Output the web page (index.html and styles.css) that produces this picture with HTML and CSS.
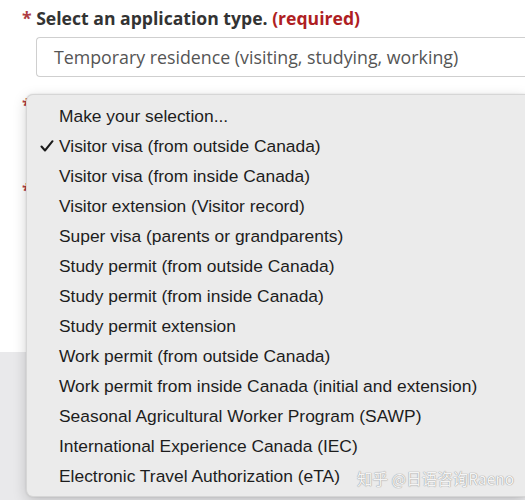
FILE: index.html
```html
<!DOCTYPE html>
<html lang="en">
<head>
<meta charset="utf-8">
<title>Application type</title>
<link rel="stylesheet" href="styles.css">
</head>
<body>
<div class="page">
  <section class="form-area">
    <div class="field">
      <div class="label"><span class="req-star">*</span> Select an application type. <span class="req">(required)</span></div>
      <div class="select">Temporary residence (visiting, studying, working)</div>
    </div>
    <div class="field hidden-field">
      <div class="label"><span class="req-star">*</span></div>
    </div>
    <div class="field hidden-field second">
      <div class="label"><span class="req-star">*</span></div>
    </div>
  </section>
  <footer class="footer"></footer>

  <ul class="menu">
    <li class="item">Make your selection...</li>
    <li class="item checked"><svg class="check" viewBox="0 0 14 12" width="14" height="12"><path d="M1.5 6.5 L5 10.5 L12.5 1.2" fill="none" stroke="#1a1a1a" stroke-width="2" stroke-linecap="round" stroke-linejoin="round"/></svg>Visitor visa (from outside Canada)</li>
    <li class="item">Visitor visa (from inside Canada)</li>
    <li class="item">Visitor extension (Visitor record)</li>
    <li class="item">Super visa (parents or grandparents)</li>
    <li class="item">Study permit (from outside Canada)</li>
    <li class="item">Study permit (from inside Canada)</li>
    <li class="item">Study permit extension</li>
    <li class="item">Work permit (from outside Canada)</li>
    <li class="item">Work permit from inside Canada (initial and extension)</li>
    <li class="item">Seasonal Agricultural Worker Program (SAWP)</li>
    <li class="item">International Experience Canada (IEC)</li>
    <li class="item">Electronic Travel Authorization (eTA)</li>
  </ul>
  <div class="watermark">知乎 @日语咨询Raeno</div>
</div>
</body>
</html>
```

FILE: styles.css
```css
html, body {
  margin: 0;
  padding: 0;
}
body {
  background: #ffffff;
  width: 525px;
  height: 500px;
  overflow: hidden;
}
.page {
  position: relative;
  width: 525px;
  height: 500px;
  display: flex;
  flex-direction: column;
  overflow: hidden;
}
.form-area {
  height: 352px;
  background: #ffffff;
  padding: 6px 0 0 22px;
  box-sizing: border-box;
  font-family: "Open Sans", "Noto Sans", sans-serif;
}
.footer {
  flex: 1;
  background: #e9e9eb;
}
.label {
  font-weight: 700;
  font-size: 17.6px;
  line-height: 24px;
  color: #333333;
  white-space: nowrap;
}
.req-star {
  color: #af3c43;
}
.req {
  color: #af1e23;
}
.select {
  margin: 7px 0 0 14px;
  height: 40px;
  box-sizing: border-box;
  border: 1px solid #cfcfcf;
  border-right: none;
  border-radius: 4px 0 0 4px;
  padding: 0 0 0 17px;
  font-size: 17.8px;
  line-height: 38px;
  color: #555555;
  white-space: nowrap;
}
.hidden-field {
  margin-top: 16px;
}
.hidden-field.second {
  margin-top: 61px;
}
.menu {
  position: absolute;
  left: 26px;
  right: 0;
  top: 94px;
  height: 403px;
  margin: 0;
  padding: 6px 0 0 0;
  box-sizing: border-box;
  list-style: none;
  background: #ebebeb;
  border: 1px solid #d6d6d6;
  border-right: none;
  border-radius: 7px 0 0 7px;
  box-shadow: 0 4px 14px rgba(0, 0, 0, 0.18), 0 0 2px rgba(0, 0, 0, 0.12);
  font-family: "Liberation Sans", Arial, sans-serif;
  font-size: 17.4px;
  color: #1d1d1d;
}
.item {
  position: relative;
  height: 30px;
  line-height: 30px;
  padding-left: 32px;
  white-space: nowrap;
}
.check {
  position: absolute;
  left: 13px;
  top: 9px;
}
.watermark {
  position: absolute;
  left: 357px;
  top: 467px;
  font-family: "Noto Sans CJK SC", "Liberation Sans", sans-serif;
  font-size: 15.5px;
  line-height: 22px;
  color: #f4f4f4;
  text-shadow: 0 0 1px #9a9a9a, 0 0 1px #9a9a9a;
  white-space: nowrap;
}
```
